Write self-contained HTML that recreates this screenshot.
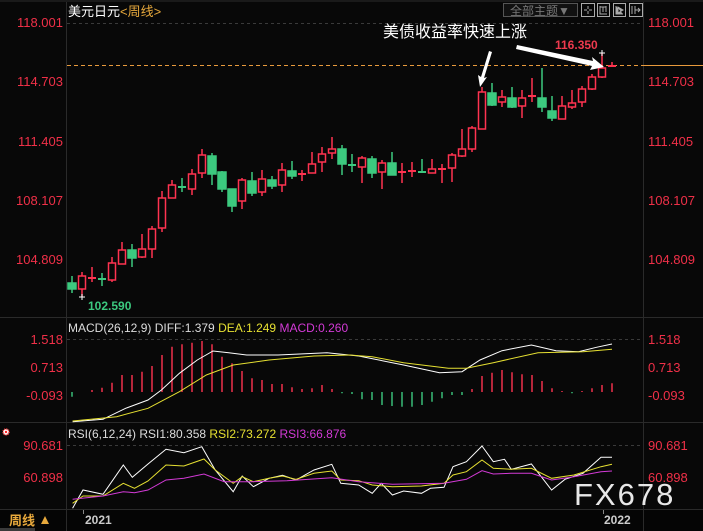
<!DOCTYPE html>
<html><head><meta charset="utf-8"><style>
html,body{margin:0;padding:0;background:#080808;}
body{width:703px;height:531px;overflow:hidden;position:relative;font-family:"Liberation Sans","Noto Sans CJK SC",sans-serif;}
svg{position:absolute;left:0;top:0;}
</style></head><body>
<svg width="703" height="531" viewBox="0 0 703 531" xmlns="http://www.w3.org/2000/svg" font-family="Liberation Sans, Noto Sans CJK SC, sans-serif">
<rect width="703" height="531" fill="#080808"/>
<rect x="0" y="0" width="703" height="2" fill="#1a1a1a"/>
<line x1="66.5" y1="2" x2="66.5" y2="531" stroke="#2a2a2a"/>
<line x1="643.5" y1="2" x2="643.5" y2="509" stroke="#2a2a2a"/>
<line x1="0" y1="317.5" x2="703" y2="317.5" stroke="#2a2a2a"/>
<line x1="0" y1="422.5" x2="703" y2="422.5" stroke="#2a2a2a"/>
<rect x="0" y="509" width="703" height="22" fill="#050505"/>
<line x1="0" y1="509.5" x2="703" y2="509.5" stroke="#2a2a2a"/>
<line x1="66.5" y1="509" x2="66.5" y2="531" stroke="#2a2a2a"/>
<line x1="643.5" y1="509" x2="643.5" y2="531" stroke="#2a2a2a"/>
<rect x="0" y="528" width="35" height="3" fill="#3a3a3a"/>
<g stroke="#3a3a3a" stroke-dasharray="3,3">
<line x1="67" y1="23.5" x2="643" y2="23.5"/>
<line x1="67" y1="339.5" x2="643" y2="339.5"/>
<line x1="67" y1="445.5" x2="643" y2="445.5"/>
</g>
<line x1="67" y1="65.5" x2="643" y2="65.5" stroke="#e89a3c" stroke-dasharray="4,3"/>
<line x1="643" y1="65.5" x2="703" y2="65.5" stroke="#e89a3c"/>
<g fill="#f03048" font-size="13">
<g text-anchor="end">
<text x="63" y="27">118.001</text><text x="63" y="86">114.703</text><text x="63" y="146">111.405</text><text x="63" y="205">108.107</text><text x="63" y="264">104.809</text>
<text x="63" y="344">1.518</text><text x="63" y="372">0.713</text><text x="63" y="400">-0.093</text>
<text x="63" y="450">90.681</text><text x="63" y="482">60.898</text>
</g>
<text x="648" y="27">118.001</text><text x="648" y="86">114.703</text><text x="648" y="146">111.405</text><text x="648" y="205">108.107</text><text x="648" y="264">104.809</text>
<text x="648" y="344">1.518</text><text x="648" y="372">0.713</text><text x="648" y="400">-0.093</text>
<text x="648" y="450">90.681</text><text x="648" y="482">60.898</text>
</g>
<text x="68" y="16" font-size="13" fill="#ffffff">美元日元<tspan fill="#e8a93c">&lt;周线&gt;</tspan></text>
<rect x="503.5" y="3.5" width="74" height="13" fill="#111" stroke="#555"/>
<text x="510" y="15" font-size="12" fill="#777">全部主题▼</text>
<g stroke="#aaa" fill="none">
<rect x="581.5" y="3.5" width="13" height="13"/><rect x="597.5" y="3.5" width="12" height="13"/><rect x="613.5" y="3.5" width="12" height="13"/><rect x="629.5" y="3.5" width="13" height="13"/>
<path d="M588 6v3M588 11v3M584 10h3M589 10h3"/>
<path d="M600 6v8h7M600 7h6M603 7v5M606 6v6"/>
<path d="M616 6v8h7M618 7l5 3-5 3z" fill="#aaa"/>
<path d="M632 6v8M635 6v8M635 10h5M638 8l2 2-2 2"/>
</g>
<g stroke-width="1.5">
<g stroke="#ff3350" fill="#080808">
<path d="M82 272V297M92 267V282M112 257V282M122 242V264M142 234V258M152 226V258M162 191V232M172 180V198M192 169V195M202 149V178M242 178V209M262 170V196M282 163V192M302 170V181M312 152V173M322 147V172M332 137V159M362 156V183M382 160V189M402 163V183M412 162V177M432 159V173M442 164V183M452 153V182M462 129V157M472 126V152M482 87V129M502 90V107M522 90V118M532 78V102M562 96V119M572 90V109M582 86V107M592 74V90M602 53V78M612 62V66"/>
<rect x="78.5" y="276" width="7" height="13"/><rect x="108.5" y="263" width="7" height="17"/><rect x="118.5" y="250" width="7" height="14"/><rect x="138.5" y="249" width="7" height="8"/><rect x="148.5" y="229" width="7" height="20"/><rect x="158.5" y="198" width="7" height="30"/><rect x="168.5" y="185" width="7" height="13"/><rect x="188.5" y="174" width="7" height="15"/><rect x="198.5" y="155" width="7" height="18"/><rect x="238.5" y="180" width="7" height="21"/><rect x="258.5" y="179" width="7" height="13"/><rect x="278.5" y="170" width="7" height="15"/><rect x="308.5" y="164" width="7" height="9"/><rect x="318.5" y="154" width="7" height="8"/><rect x="328.5" y="149" width="7" height="4"/><rect x="358.5" y="158" width="7" height="9"/><rect x="378.5" y="163" width="7" height="9"/><rect x="428.5" y="169" width="7" height="4"/><rect x="448.5" y="155" width="7" height="13"/><rect x="458.5" y="149" width="7" height="7"/><rect x="468.5" y="128" width="7" height="21"/><rect x="478.5" y="92" width="7" height="37"/><rect x="498.5" y="97" width="7" height="5"/><rect x="518.5" y="98" width="7" height="8"/><rect x="558.5" y="106" width="7" height="13"/><rect x="568.5" y="103" width="7" height="4"/><rect x="578.5" y="89" width="7" height="13"/><rect x="588.5" y="77" width="7" height="12"/><rect x="598.5" y="68" width="7" height="9"/>
<path d="M88 278h8M298 174h8M398 172h8M408 171h8M438 169h8M528 96h8M608 66h8" stroke-width="2"/>
</g>
<g stroke="#3cc97f" fill="#3cc97f">
<path d="M72 276V293M102 273V286M132 244V267M182 178V192M212 153V185M222 171V192M232 189V212M252 172V196M272 176V189M292 161V179M342 145V175M352 154V172M372 156V178M392 152V175M422 159V173M492 83V106M512 87V108M542 68V112M552 96V121"/>
<rect x="68" y="283" width="8" height="6"/><rect x="128" y="250" width="8" height="8"/><rect x="208" y="156" width="8" height="18"/><rect x="218" y="172" width="8" height="17"/><rect x="228" y="189" width="8" height="17"/><rect x="248" y="181" width="8" height="12"/><rect x="268" y="180" width="8" height="6"/><rect x="288" y="171" width="8" height="5"/><rect x="338" y="149" width="8" height="15"/><rect x="368" y="159" width="8" height="14"/><rect x="388" y="163" width="8" height="12"/><rect x="488" y="93" width="8" height="12"/><rect x="508" y="98" width="8" height="9"/><rect x="538" y="98" width="8" height="9"/><rect x="548" y="111" width="8" height="7"/>
<path d="M98 279h8M178 187h8M348 165h8M418 172h8" stroke-width="2"/>
</g>
</g>
<path d="M79 297h6M82 294v6M599 53h6M602 50v6" stroke="#fff" stroke-width="1"/>
<text x="88" y="310" font-size="12" font-weight="bold" fill="#3cc97f">102.590</text>
<text x="555" y="49" font-size="12" font-weight="bold" fill="#ee3a4e">116.350</text>
<text x="383" y="37" font-size="16" fill="#ffffff">美债收益率快速上涨</text>
<path d="M489 51 L492 52 L484 78 L487 77 L480 87 L478 75 L481 77Z" fill="#fff"/>
<path d="M517 45 L593 61 L592 57 L604 67 L590 70 L592 66 L516 49Z" fill="#fff"/>
<text x="68" y="332" font-size="12" fill="#ddd">MACD(26,12,9) DIFF:1.379 <tspan fill="#e6e032">DEA:1.249</tspan> <tspan fill="#d33ad6">MACD:0.260</tspan></text>
<g stroke-width="1.4">
<path stroke="#ff3350" d="M92 392V390M102 392V387.7M112 392V382.7M122 392V375M132 392V375M142 392V371.7M152 392V366M162 392V355M172 392V346.7M182 392V344.3M192 392V342.7M202 392V341M212 392V344.3M222 392V356.7M232 392V363.3M242 392V371M252 392V378.3M262 392V380M272 392V384M282 392V384M292 392V387.3M302 392V389M312 392V388.3M322 392V385M332 392V389M472 392V389M482 392V376M492 392V372.7M502 392V370M512 392V372.3M522 392V374.3M532 392V375M542 392V381M552 392V388.3M562 392V391M582 392V391M592 392V388.3M602 392V385M612 392V383.3"/>
<path stroke="#3cc97f" d="M72 392V396.7M342 392V393.3M352 392V394M362 392V399.3M372 392V400M382 392V405M392 392V406M402 392V406.7M412 392V406.7M422 392V405M432 392V401.7M442 392V398.3M452 392V395M462 392V395M572 392V393.3"/>
</g>
<polyline fill="none" stroke="#fff" stroke-width="1" points="72.6,421.7 103,419.3 125.6,408.3 148,400 161.4,390 179.4,373.3 197.3,360 213,351 228.7,352.7 246.6,355 278,355 327,352.7 358.7,356 403.6,365 439.5,372.7 462,371.7 480,360 502,350.7 531.4,345 556,350.7 578.5,351.7 596.4,347.3 612,344"/>
<polyline fill="none" stroke="#e6e032" stroke-width="1" points="72.6,421 116.6,416.7 148,408.3 179.4,391.7 206.3,375 233.2,365 269,360 314,356 349.8,355 372.2,356.7 403.6,362.7 448.4,368.3 466.4,368.3 493.3,362.7 538,352.7 583,351.7 612,349.3"/>
<circle cx="6" cy="432" r="3" fill="#fff" stroke="#f33" stroke-width="1.5" stroke-dasharray="1,1"/>
<circle cx="6" cy="432" r="1.2" fill="#f22"/>
<text x="68" y="438" font-size="12" fill="#ddd">RSI(6,12,24) RSI1:80.358 <tspan fill="#e6e032">RSI2:73.272</tspan> <tspan fill="#d33ad6">RSI3:66.876</tspan></text>
<polyline fill="none" stroke="#fff" stroke-width="1" points="72.6,508.3 83,490 103,494.3 123.3,465 132.3,477.3 148,464 166,449.3 183.9,452.7 201.8,446.7 215.2,470 233.2,491.7 242.2,476 253.4,486.7 269,478.3 282.5,475.3 296,480 314,470 331.8,464.3 340.8,483.3 358.7,485 372.2,493.3 381.2,483.3 392.4,495 403.6,491 421.5,493.3 430.5,488.3 444,487.3 453,466.7 466.4,461.7 482,446 493.3,461.7 504.5,459.3 511.2,469.3 531.4,464 551.6,490 565,479.3 583,473.3 601,457.3 612,457.3"/>
<polyline fill="none" stroke="#e6e032" stroke-width="1" points="72.6,503.3 83,496 103,496 123.3,483.3 134.5,488.3 148,481 166,465 183.9,466 204,459 215.2,470 233.2,483.3 242.2,476.7 253.4,481.7 269,478.3 282.5,476 296,479.3 314,473.3 331.8,471 340.8,480 358.7,480.7 372.2,485 392.4,486.7 421.5,486 444,483.3 453,475 466.4,471.7 482,460 493.3,468.3 511.2,469.3 531.4,468.3 551.6,478.3 574,475 601,466.7 612,464.3"/>
<polyline fill="none" stroke="#d33ad6" stroke-width="1" points="72.6,499.3 103,496 123.3,491.7 134.5,492.7 148,490 166,480 183.9,478.3 204,474 224.2,481.7 251,481.7 287,480.7 331.8,477.7 358.7,481.7 392.4,484.3 444,483.3 466.4,479.3 482,470.7 493.3,474 511.2,473.3 531.4,473.3 551.6,480 574,476.7 601,471.7 612,471"/>
<text x="574" y="505" font-size="31" fill="#e8e8e8" letter-spacing="2">FX678</text>
<text x="9" y="525" font-size="13" font-weight="bold" fill="#e8a93c">周线</text>
<path d="M41 524 L45 516 L49 524Z" fill="#e8a93c"/>
<line x1="83.5" y1="510" x2="83.5" y2="514" stroke="#888"/>
<text x="85" y="524" font-size="12" font-weight="bold" fill="#ccc">2021</text>
<line x1="603.5" y1="510" x2="603.5" y2="514" stroke="#888"/>
<text x="604" y="524" font-size="12" font-weight="bold" fill="#ccc">2022</text>
</svg>
</body></html>
